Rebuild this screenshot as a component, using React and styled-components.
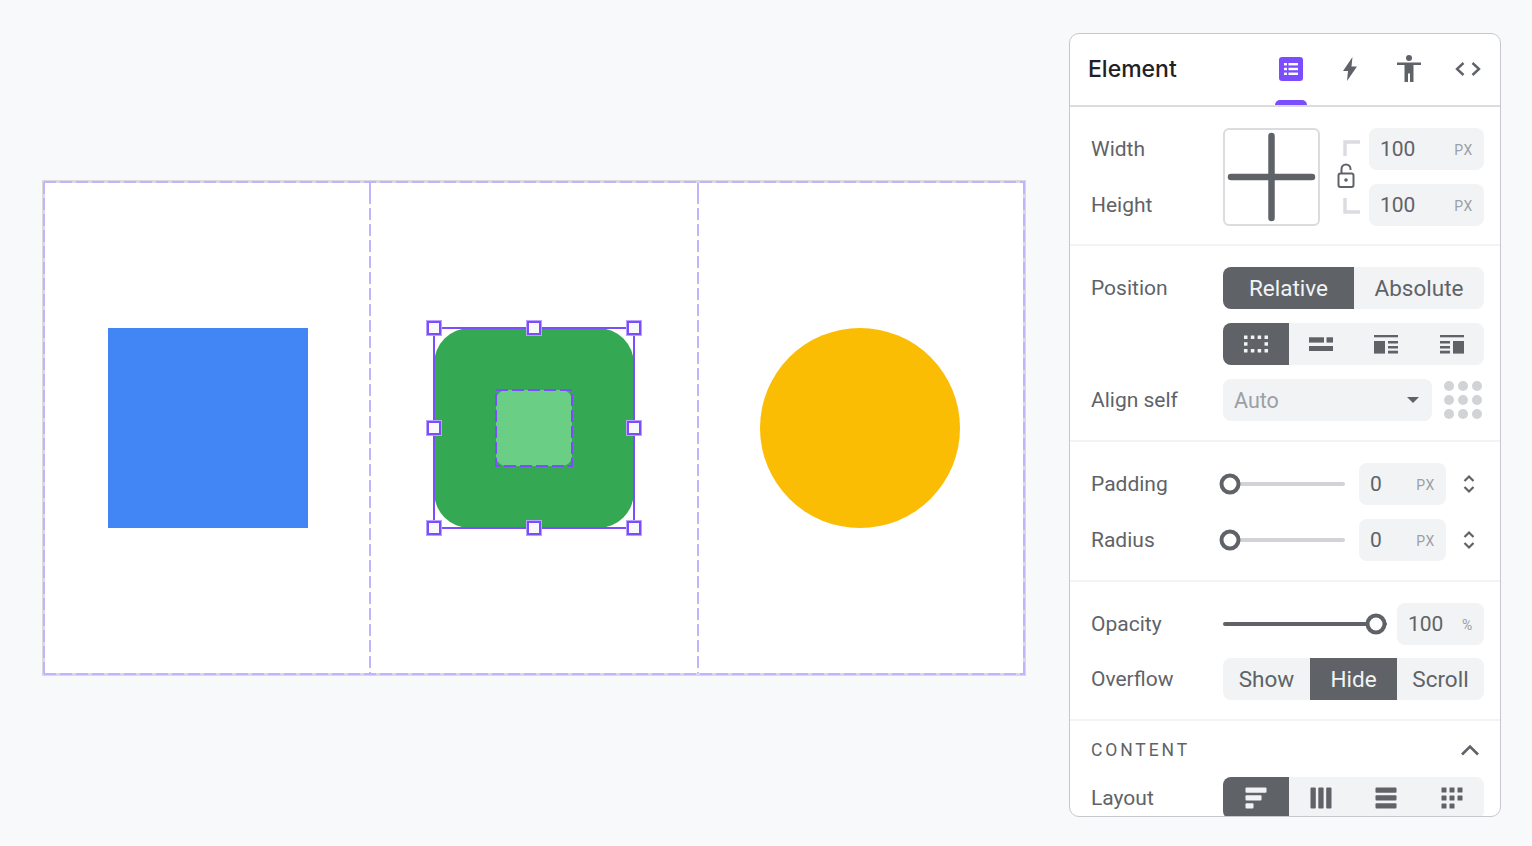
import React from 'react'
import styled, { createGlobalStyle } from 'styled-components'

const GlobalStyle = createGlobalStyle`
  html, body {
    margin: 0;
    padding: 0;
    background: #f8f9fa;
    font-family: Roboto, "Liberation Sans", sans-serif;
  }
`

// 12px dash, 4px gap
const DASH = '#c3b3fd'
const GAP = '#d9d9dc'
const dashes = (angle, gap) =>
  `repeating-linear-gradient(${angle}deg, ${DASH}, ${DASH} 12px, ${gap} 12px, ${gap} 16px)`

const Page = styled.div`
  display: flex;
  align-items: flex-start;
  justify-content: space-between;
  box-sizing: border-box;
  width: 1532px;
  height: 846px;
  padding: 33px 31px 29px 43px;
  overflow: hidden;
`

const Canvas = styled.div`
  display: grid;
  grid-template-columns: repeat(3, 326px);
  box-sizing: border-box;
  width: 982px;
  height: 494px;
  margin-top: 148px;
  padding: 2px;
  box-shadow: 0 0 0 1px ${GAP};
  background:
    ${dashes(90, GAP)} left 1px top 0 / 100% 2px no-repeat,
    ${dashes(90, GAP)} left 1px bottom 0 / 100% 2px no-repeat,
    ${dashes(180, GAP)} left 0 top 1px / 2px 100% no-repeat,
    ${dashes(180, GAP)} right 0 top 1px / 2px 100% no-repeat,
    ${GAP};
`

const Cell = styled.div`
  position: relative;
  display: flex;
  align-items: center;
  justify-content: center;
  background: #fff;

  &::after {
    content: ${p => (p.$divider ? "''" : 'none')};
    position: absolute;
    top: 0;
    bottom: 0;
    width: 2px;
    ${p => p.$divider}: 0;
    background: ${dashes(180, '#fff')} 0 9px;
  }
`

const BlueSquare = styled.div`
  width: 200px;
  height: 200px;
  background: #4285f4;
`

const YellowCircle = styled.div`
  width: 200px;
  height: 200px;
  border-radius: 50%;
  background: #fbbc04;
`

const GreenSquare = styled.div`
  position: relative;
  display: flex;
  align-items: center;
  justify-content: center;
  width: 200px;
  height: 200px;
  border-radius: 36px;
  background: #34a853;
  z-index: 1;
`

const SelectBox = styled.div`
  position: absolute;
  inset: -1px;
  border: 2px solid #7c4dff;
  box-sizing: border-box;
`

const Handle = styled.span`
  position: absolute;
  left: ${p => p.$x}%;
  top: ${p => p.$y}%;
  box-sizing: border-box;
  width: 14px;
  height: 14px;
  margin: -7px 0 0 -7px;
  background: #f8f9fa;
  border: 2px solid #7c4dff;
  box-shadow: 0 0 0 1px #b9a3fd;
`

const InnerSquare = styled.div`
  position: relative;
  width: 76px;
  height: 76px;
  border-radius: 10px;
  background: #6ace85;
`

const InnerDash = styled.svg`
  position: absolute;
  inset: -1px;
  width: 78px;
  height: 78px;
`

const Panel = styled.aside`
  box-sizing: border-box;
  width: 432px;
  height: 784px;
  background: #fff;
  border: 1px solid #c6c8cc;
  border-radius: 10px;
  overflow: hidden;
  color: #5f6368;
`

const Header = styled.header`
  display: flex;
  align-items: center;
  box-sizing: border-box;
  height: 73px;
  padding: 0 3px 0 18px;
  border-bottom: 2px solid #dadce0;
`

const Title = styled.h1`
  flex: 1;
  margin: 0 0 2px;
  font-family: Inter, Roboto, sans-serif;
  font-size: 23px;
  font-weight: 500;
  color: #202124;
`

const Tab = styled.div`
  position: relative;
  display: flex;
  align-items: center;
  justify-content: center;
  box-sizing: border-box;
  width: 59px;
  height: 71px;
  padding-bottom: 2px;

  &::after {
    content: ${p => (p.$active ? "''" : 'none')};
    position: absolute;
    left: 14px;
    bottom: 0;
    width: 32px;
    height: 5px;
    border-radius: 5px 5px 0 0;
    background: #7c4dff;
  }
`

const Section = styled.section`
  display: flex;
  flex-direction: column;
  gap: ${p => p.$gap || 14}px;
  padding: 21px 16px ${p => p.$bottom || 19}px 21px;
  border-bottom: 2px solid #f1f3f4;

  &:last-child {
    border-bottom: 0;
    padding-top: 20px;
  }
`

const Row = styled.div`
  display: grid;
  grid-template-columns: 132px 1fr;
  align-items: center;
  min-height: 42px;
`

const Label = styled.span`
  font-size: 21px;
  color: #5f6368;
`

const SizeRow = styled.div`
  display: grid;
  grid-template-columns: 132px 97px 49px 115px;
  grid-template-rows: 42px 42px;
  row-gap: 14px;
  align-items: center;
`

const Crosshair = styled.div`
  grid-column: 2;
  grid-row: 1 / 3;
  box-sizing: border-box;
  height: 98px;
  border: 2px solid #dadce0;
  border-radius: 6px;

  svg {
    display: block;
  }
`

const LockColumn = styled.div`
  grid-column: 3;
  grid-row: 1 / 3;
  display: flex;
  flex-direction: column;
  align-items: flex-start;
  box-sizing: border-box;
  height: 98px;
  padding: 12px 0 0 17px;

  svg {
    display: block;
  }
`

const BracketSlot = styled.div`
  margin: ${p => p.$top}px 0 0 6px;
`

const LockSlot = styled.div`
  margin-top: 7px;
`

const NumberField = styled.div`
  display: flex;
  align-items: center;
  justify-content: space-between;
  box-sizing: border-box;
  width: ${p => p.$w || 115}px;
  height: 42px;
  padding: 0 11px 1px 11px;
  background: #f1f3f4;
  border-radius: 8px;
  font-size: 21px;
  color: #5f6368;
`

const Unit = styled.span`
  margin-top: 3px;
  font-size: 14px;
  letter-spacing: 0.7px;
  color: #9aa0a6;
`

const Segments = styled.div`
  display: grid;
  grid-template-columns: ${p => p.$cols};
  height: 42px;
  background: #f1f3f4;
  border-radius: 8px;
  overflow: hidden;
`

const Segment = styled.div`
  display: flex;
  align-items: center;
  justify-content: center;
  font-size: 22.5px;
  background: ${p => (p.$active ? '#5f6368' : 'transparent')};
  color: ${p => (p.$active ? '#f1f3f4' : '#5f6368')};
`

const AlignRow = styled.div`
  display: flex;
  align-items: center;
  justify-content: space-between;
`

const SelectField = styled.div`
  display: flex;
  align-items: center;
  justify-content: space-between;
  box-sizing: border-box;
  width: 209px;
  height: 42px;
  padding: 0 13px 0 11px;
  background: #f1f3f4;
  border-radius: 8px;
  font-size: 21.5px;
  color: #9aa0a6;
`

const Caret = styled.span`
  width: 0;
  height: 0;
  border-left: 6.5px solid transparent;
  border-right: 6.5px solid transparent;
  border-top: 6.5px solid #5f6368;
`

const Dots = styled.div`
  display: grid;
  grid-template-columns: repeat(3, 10px);
  gap: 4px;
  margin-right: 2px;

  span {
    width: 10px;
    height: 10px;
    border-radius: 50%;
    background: #d2d3d6;
  }
`

const SliderTrack = styled.div`
  position: relative;
  flex: 1;
  height: 4px;
  border-radius: 2px;
  background: ${p => (p.$full ? '#5f6368' : '#d2d3d6')};
`

const SliderKnob = styled.span`
  position: absolute;
  top: 50%;
  left: ${p => p.$at}%;
  box-sizing: border-box;
  width: 21px;
  height: 21px;
  transform: translate(-50%, -50%);
  border: 4px solid #5f6368;
  border-radius: 50%;
  background: #fff;
`

const SliderRow = styled.div`
  display: flex;
  align-items: center;
  gap: ${p => p.$gap || 14}px;
  margin-left: ${p => p.$offset || 0}px;
`

const StepperSlot = styled.div`
  display: flex;
  margin: 0 8px 0 2px;
`

const SectionTitle = styled.div`
  display: flex;
  align-items: center;
  justify-content: space-between;
  height: 18px;
  padding-right: 4px;
  font-size: 17.5px;
  letter-spacing: 2.9px;
  color: #5f6368;
`

const Svg = ({ size = 24, w, h, children }) => (
  <svg width={w || size} height={h || size} viewBox={`0 0 ${w || size} ${h || size}`} fill="#5f6368">
    {children}
  </svg>
)

const ListIcon = () => (
  <Svg size={24}>
    <rect width="24" height="24" rx="3" fill="#7c4dff" />
    <g fill="#fff">
      <rect x="5" y="6" width="3" height="2.4" />
      <rect x="5" y="10.800" width="3" height="2.4" />
      <rect x="5" y="15.600" width="3" height="2.4" />
      <rect x="9.500" y="6" width="9.500" height="2.4" />
      <rect x="9.500" y="10.800" width="9.500" height="2.4" />
      <rect x="9.500" y="15.600" width="9.500" height="2.4" />
    </g>
  </Svg>
)

const BoltIcon = () => (
  <Svg w={14} h={24}>
    <path d="M9.500 0 0 14h5L4 24 14 9.500H8.500z" />
  </Svg>
)

const PersonIcon = () => (
  <Svg w={24} h={27}>
    <circle cx="12" cy="3" r="3" />
    <path d="M0 7.400h24V10h-7.500v17H13v-8.500h-2V27H7.500V10H0z" />
  </Svg>
)

const CodeIcon = () => (
  <svg width="26" height="16" viewBox="0 0 26 16" fill="none" stroke="#5f6368" strokeWidth="2.4">
    <path d="M8.500 2 2 8l6.500 6M17.500 2 24 8l-6.500 6" />
  </svg>
)

const LockIcon = () => (
  <svg width="18" height="25" viewBox="0 0 18 25" fill="none" stroke="#5f6368" strokeWidth="2">
    <rect x="1.500" y="10.500" width="15" height="13.500" rx="2" />
    <path d="M4.500 10.500V6a4.500 4.500 0 0 1 9 0v1" />
    <circle cx="9" cy="17" r="1.800" fill="#5f6368" stroke="none" />
  </svg>
)

const Bracket = ({ flip }) => (
  <svg width="17" height="16" viewBox="0 0 17 16" fill="none" stroke="#dadce0" strokeWidth="3.500">
    <path d={flip ? 'M2 0v14h15' : 'M2 16V2h15'} />
  </svg>
)

const Stepper = () => (
  <svg width="14" height="22" viewBox="0 0 14 22" fill="none" stroke="#5f6368" strokeWidth="2.200">
    <path d="M2.500 8 7 3.500 11.500 8M2.500 14 7 18.500 11.500 14" />
  </svg>
)

const Chevron = () => (
  <svg width="20" height="12" viewBox="0 0 20 12" fill="none" stroke="#5f6368" strokeWidth="2.600">
    <path d="M2 10.500 10 2.500l8 8" />
  </svg>
)

const Blocks = ({ rects, fill = '#5f6368' }) => (
  <Svg size={26}>
    <g fill={fill}>
      {rects.map(([x, y, w, h, r], i) => (
        <rect key={i} x={x} y={y} width={w} height={h} rx={r || 0} />
      ))}
    </g>
  </Svg>
)

const dotted = [[1, 11.200, 3.500, 3.500], [21.500, 11.200, 3.500, 3.500]]
for (let i = 0; i < 4; i++) {
  dotted.push([1 + i * 6.830, 4.500, 3.500, 3.500], [1 + i * 6.830, 18, 3.500, 3.500])
}

const gridIcon = []
for (let r = 0; r < 3; r++) {
  for (let c = 0; c < 3; c++) {
    if (r === 2 && c === 2) continue
    gridIcon.push([2.500 + c * 8, 2.500 + r * 8, 5, 5, 0.5])
  }
}

const positionIcons = [
  dotted,
  [[1, 6.300, 15, 5.300], [18.500, 6.300, 6.500, 5.300], [1, 15, 24, 5]],
  [[1, 4, 24, 2.300], [1, 10, 11, 12.600], [15, 10, 10, 2.500], [15, 15, 10, 2.500], [15, 19.700, 10, 2.800]],
  [[1, 4, 24, 2.300], [1, 10, 10, 2.500], [1, 15, 10, 2.500], [1, 19.700, 10, 2.800], [14, 10, 11, 12.600]],
]

const layoutIcons = [
  [[2.500, 2.500, 21, 5.300, 1], [2.500, 10.300, 16, 5.300, 1], [2.500, 18.200, 8, 5.300, 1]],
  [[2.500, 2.500, 5.300, 21, 1], [10.300, 2.500, 5.300, 21, 1], [18.200, 2.500, 5.300, 21, 1]],
  [[2.500, 2.500, 21, 5.300, 1], [2.500, 10.300, 21, 5.300, 1], [2.500, 18.200, 21, 5.300, 1]],
  gridIcon,
]

const handles = [
  [0, 0], [50, 0], [100, 0],
  [0, 50], [100, 50],
  [0, 100], [50, 100], [100, 100],
]

const FOUR_COLS = '66px 64px 66px 65px'

export default function App() {
  return (
    <Page>
      <GlobalStyle />
      <Canvas>
        <Cell $divider="right">
          <BlueSquare />
        </Cell>
        <Cell>
          <GreenSquare>
            <InnerSquare>
              <InnerDash viewBox="0 0 78 78" fill="none">
                <rect x="1" y="1" width="76" height="76" stroke="#7c4dff" strokeWidth="2" strokeDasharray="12 4" />
              </InnerDash>
            </InnerSquare>
            <SelectBox />
            {handles.map(([x, y]) => (
              <Handle key={`${x}-${y}`} $x={x} $y={y} />
            ))}
          </GreenSquare>
        </Cell>
        <Cell $divider="left">
          <YellowCircle />
        </Cell>
      </Canvas>

      <Panel>
        <Header>
          <Title>Element</Title>
          <Tab $active><ListIcon /></Tab>
          <Tab><BoltIcon /></Tab>
          <Tab><PersonIcon /></Tab>
          <Tab><CodeIcon /></Tab>
        </Header>

        <Section $bottom={18}>
          <SizeRow>
            <Label>Width</Label>
            <Crosshair>
              <svg width="93" height="94" viewBox="0 0 93 94" fill="none" stroke="#5f6368" strokeWidth="6.500" strokeLinecap="round">
                <path d="M46.500 6v82M6 47h81" />
              </svg>
            </Crosshair>
            <LockColumn>
              <BracketSlot $top={0}><Bracket /></BracketSlot>
              <LockSlot><LockIcon /></LockSlot>
              <BracketSlot $top={10}><Bracket flip /></BracketSlot>
            </LockColumn>
            <NumberField>100 <Unit>PX</Unit></NumberField>
            <Label>Height</Label>
            <NumberField>100 <Unit>PX</Unit></NumberField>
          </SizeRow>
        </Section>

        <Section>
          <Row>
            <Label>Position</Label>
            <Segments $cols="131px 1fr">
              <Segment $active>Relative</Segment>
              <Segment>Absolute</Segment>
            </Segments>
          </Row>
          <Row>
            <span />
            <Segments $cols={FOUR_COLS}>
              {positionIcons.map((rects, i) => (
                <Segment key={i} $active={i === 0}>
                  <Blocks rects={rects} fill={i === 0 ? '#f1f3f4' : '#5f6368'} />
                </Segment>
              ))}
            </Segments>
          </Row>
          <Row>
            <Label>Align self</Label>
            <AlignRow>
              <SelectField>Auto <Caret /></SelectField>
              <Dots>
                {Array.from({ length: 9 }, (_, i) => <span key={i} />)}
              </Dots>
            </AlignRow>
          </Row>
        </Section>

        <Section>
          <Row>
            <Label>Padding</Label>
            <SliderRow $offset={7}>
              <SliderTrack><SliderKnob $at={0} /></SliderTrack>
              <NumberField $w={87}>0 <Unit>PX</Unit></NumberField>
              <StepperSlot><Stepper /></StepperSlot>
            </SliderRow>
          </Row>
          <Row>
            <Label>Radius</Label>
            <SliderRow $offset={7}>
              <SliderTrack><SliderKnob $at={0} /></SliderTrack>
              <NumberField $w={87}>0 <Unit>PX</Unit></NumberField>
              <StepperSlot><Stepper /></StepperSlot>
            </SliderRow>
          </Row>
        </Section>

        <Section $gap={13}>
          <Row>
            <Label>Opacity</Label>
            <SliderRow $gap={10}>
              <SliderTrack $full><SliderKnob $at={93.500} /></SliderTrack>
              <NumberField $w={87}>100 <Unit>%</Unit></NumberField>
            </SliderRow>
          </Row>
          <Row>
            <Label>Overflow</Label>
            <Segments $cols="repeat(3, 1fr)">
              <Segment>Show</Segment>
              <Segment $active>Hide</Segment>
              <Segment>Scroll</Segment>
            </Segments>
          </Row>
        </Section>

        <Section $gap={18}>
          <SectionTitle>CONTENT <Chevron /></SectionTitle>
          <Row>
            <Label>Layout</Label>
            <Segments $cols={FOUR_COLS}>
              {layoutIcons.map((rects, i) => (
                <Segment key={i} $active={i === 0}>
                  <Blocks rects={rects} fill={i === 0 ? '#f1f3f4' : '#5f6368'} />
                </Segment>
              ))}
            </Segments>
          </Row>
        </Section>
      </Panel>
    </Page>
  )
}
